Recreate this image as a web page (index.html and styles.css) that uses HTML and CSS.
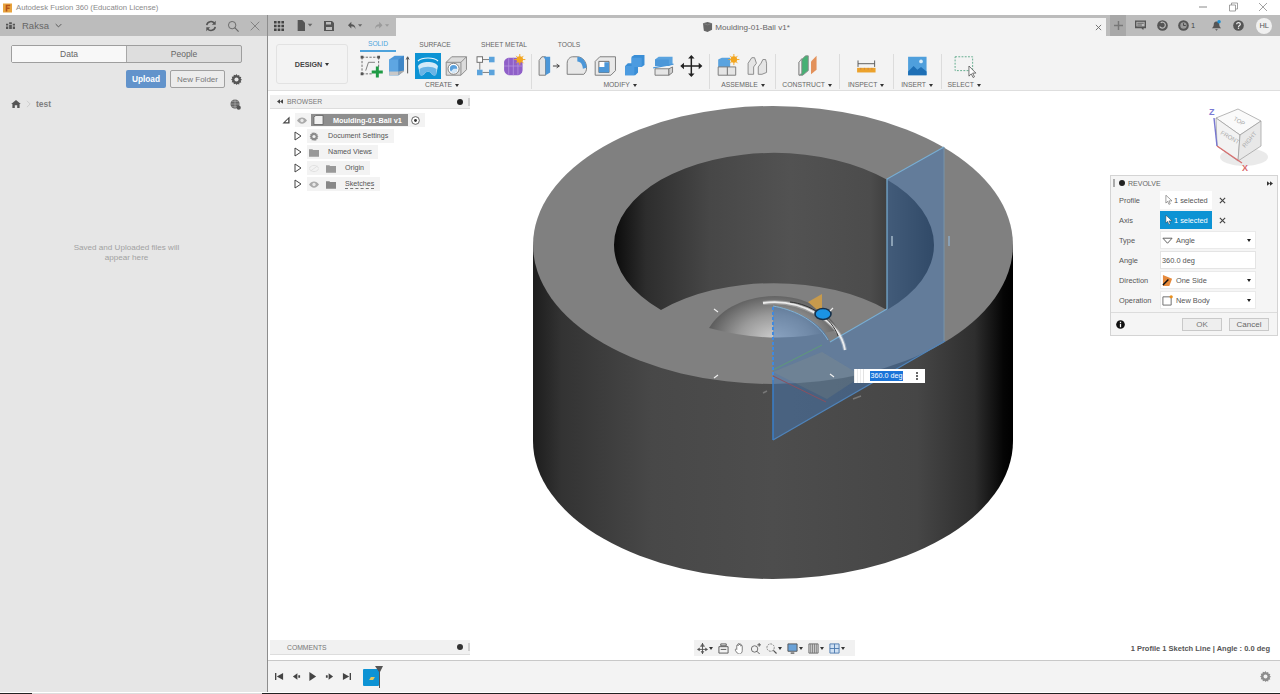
FILE: index.html
```html
<!DOCTYPE html>
<html lang="en">
<head>
<meta charset="utf-8">
<title>Autodesk Fusion 360</title>
<link rel="stylesheet" href="styles.css">
</head>
<body>
<header class="titlebar">
  <svg class="logo" viewBox="0 0 10 10"><rect width="10" height="10" fill="#e8a33d"/><path d="M3 1.5h5v1.6H4.8v1.4h2.6v1.5H4.8V9H3z" fill="#b5541c"/></svg>
  <span class="app-name">Autodesk Fusion 360 (Education License)</span>
  <div class="win-controls">
    <svg class="wc" viewBox="0 0 10 10"><path d="M1 5h8" stroke="#8a8a8a" fill="none"/></svg>
    <svg class="wc" viewBox="0 0 10 10"><path d="M1.5 3h6v6h-6zM3.500 3V1h6v6H7.500" stroke="#8a8a8a" fill="none" stroke-width=".8"/></svg>
    <svg class="wc" viewBox="0 0 10 10"><path d="M1 1l8 8M9 1l-8 8" stroke="#8a8a8a" fill="none" stroke-width=".8"/></svg>
  </div>
</header>
<div class="app">
  <aside class="left">
    <div class="left-head">
      <svg class="ico-team" viewBox="0 0 12 10"><path d="M4.500 1.500h3v2h-3zM1 3h2.500v2H1zM8.500 3H11v2H8.500zM1 6h2.500v3H1zM4.500 4.500h3V9h-3zM8.500 6H11v3H8.500z" fill="#555"/></svg>
      <span class="team">Raksa</span>
      <svg class="chev" viewBox="0 0 10 6"><path d="M1 1l4 4 4-4" stroke="#555" stroke-width="1.400" fill="none"/></svg>
      <span class="spacer"></span>
      <svg class="head-ico" viewBox="0 0 14 14"><path d="M2 6a5 5 0 0 1 9-2M12 8a5 5 0 0 1-9 2" stroke="#555" stroke-width="1.800" fill="none"/><path d="M12.500 1v4.500H8zM1.500 13V8.500H6z" fill="#555"/></svg>
      <svg class="head-ico" viewBox="0 0 14 14"><circle cx="6" cy="6" r="4.300" stroke="#666" stroke-width="1.100" fill="none"/><path d="M9 9l4.500 4.500" stroke="#666" stroke-width="1.300"/></svg>
      <svg class="head-ico" viewBox="0 0 14 14"><path d="M2 2l10 10M12 2L2 12" stroke="#7a7a7a" stroke-width="1"/></svg>
    </div>
    <div class="seg">
      <span class="seg-item seg-on">Data</span>
      <span class="seg-item">People</span>
    </div>
    <div class="actions">
      <button class="btn-upload">Upload</button>
      <button class="btn-folder">New Folder</button>
      <svg class="gear-lg" viewBox="0 0 14 14"><use href="#gear"/></svg>
    </div>
    <div class="crumbs">
      <svg class="home" viewBox="0 0 12 10"><path d="M6 0l6 5h-1.500v5H7.500V6.500h-3V10H1.500V5H0z" fill="#555"/></svg>
      <svg class="crumb-sep" viewBox="0 0 6 10"><path d="M1 1l4 4-4 4" stroke="#c8c8c8" fill="none"/></svg>
      <span class="crumb">test</span>
      <span class="spacer"></span>
      <svg class="globe" viewBox="0 0 12 12"><circle cx="5.500" cy="5.500" r="5" fill="#666"/><path d="M0 5.500h11M5.500 0v11M2 2.500h7M2 8.500h7" stroke="#ccc" stroke-width=".5"/><circle cx="9.500" cy="9.500" r="2.300" fill="#555"/></svg>
    </div>
    <p class="empty">Saved and Uploaded files will<br>appear here</p>
  </aside>
  <main class="main">
    <div class="topbar">
      <div class="quick">
        <svg class="q q-grid" viewBox="0 0 10 10"><path d="M0 0h2.600v2.600H0zM3.700 0h2.600v2.600H3.700zM7.400 0H10v2.600H7.400zM0 3.700h2.600v2.600H0zM3.700 3.700h2.600v2.600H3.700zM7.400 3.700H10v2.600H7.400zM0 7.400h2.600V10H0zM3.700 7.400h2.600V10H3.700zM7.400 7.400H10V10H7.400z" fill="#444"/></svg>
        <svg class="q q-file" viewBox="0 0 18 12"><path d="M1 0h5l3 3v9H1z" fill="#555"/><path d="M12 4h5l-2.500 3z" fill="#666"/></svg>
        <svg class="q q-save" viewBox="0 0 10 10"><path d="M0 0h8l2 2v8H0z" fill="#555"/><path d="M2 1h5v2.500H2zM2 6h6v3H2z" fill="#bcbcbc"/></svg>
        <svg class="q q-undo" viewBox="0 0 18 12"><path d="M4 1L0 5l4 4V6.300c2.500 0 4 .7 5 3.700 0-4-2-6-5-6z" fill="#555"/><path d="M12 4h5l-2.500 3z" fill="#666"/></svg>
        <svg class="q q-redo" viewBox="0 0 18 12"><path d="M5 1l4 4-4 4V6.300C2.500 6.300 1 7 0 10c0-4 2-6 5-6z" fill="#9a9a9a"/><path d="M12 4h5l-2.500 3z" fill="#9a9a9a"/></svg>
      </div>
      <div class="doc-tab">
        <div class="doc-title">
          <svg class="doc-cube" viewBox="0 0 12 11"><path d="M1 1.500L6 0l5 1.500v7L6 11 2 9.500z" fill="#666"/><path d="M1 1.500l5 1.700 5-1.700" stroke="#999" stroke-width=".5" fill="none"/></svg>
          <span>Moulding-01-Ball v1*</span>
        </div>
        <svg class="doc-close" viewBox="0 0 8 8"><path d="M1 1l6 6M7 1L1 7" stroke="#666" stroke-width="1"/></svg>
      </div>
      <div class="top-right">
        <span class="plus-box"><svg viewBox="0 0 10 10" class="plus"><path d="M5 0v10M0 5h10" stroke="#777" stroke-width="1.600"/></svg></span>
        <svg class="tr tr-chat" viewBox="0 0 12 11"><path d="M0 0h12v8.500H9.500L9 10.500 7 8.500H0z" fill="#555"/><path d="M1.500 1.500h9v5h-9z" fill="#bcbcbc"/><path d="M2.500 3h7M2.500 5h5" stroke="#555"/></svg>
        <svg class="tr tr-sync" viewBox="0 0 12 12"><circle cx="6" cy="6" r="5.800" fill="#555"/><path d="M3 7a3.200 3.200 0 1 0 1-4" stroke="#bcbcbc" stroke-width="1.300" fill="none"/></svg>
        <span class="tr-clock"><svg class="tr" viewBox="0 0 12 12"><circle cx="6" cy="6" r="5.800" fill="#555"/><circle cx="6" cy="6" r="3.500" fill="#999"/><path d="M6 3.500V6h2.500" stroke="#444" fill="none"/></svg><span class="clock-n">1</span></span>
        <svg class="tr tr-bell" viewBox="0 0 12 12"><path d="M6 1.500c2.300 0 3 1.700 3 3.500 0 2 1 3 2 4H1c1-1 2-2 2-4 0-1.800.7-3.500 3-3.500zM4.500 10h3L6 11.800z" fill="#555"/><circle cx="8.800" cy="2" r="1.900" fill="#1f8fd0"/></svg>
        <svg class="tr tr-help" viewBox="0 0 12 12"><circle cx="6" cy="6" r="5.800" fill="#555"/><path d="M4 4.500C4 2.200 8 2.300 8 4.500 8 6 6 6 6 7.500" stroke="#eee" stroke-width="1.300" fill="none"/><rect x="5.300" y="8.300" width="1.400" height="1.400" fill="#eee"/></svg>
        <span class="avatar">HL</span>
      </div>
    </div>
    <div class="toolbar">
      <button class="design">DESIGN <i class="caret"></i></button>
      <div class="ribbon">
        <nav class="tabs">
          <span class="tab t-solid">SOLID</span>
          <span class="tab t-surface">SURFACE</span>
          <span class="tab t-sheet">SHEET METAL</span>
          <span class="tab t-tools">TOOLS</span>
        </nav>
        <div class="groups">
          <section class="grp g-create sep">
            <div class="icons">
              <svg class="tool" viewBox="0 0 28 26"><path d="M5 3.500h18M5 3.500v18M23 3.500v11M5 21.500h11" stroke="#666" stroke-dasharray="2.500 1.500" fill="none"/><path d="M9 18l3-9h7" stroke="#777" fill="none"/><path d="M3.500 2h3v3h-3zM21.500 2h3v3h-3zM3.500 20h3v3h-3z" fill="#555"/><path d="M20 13.500h3.200v4.300h4.300V21h-4.300v4.500H20V21h-4.500v-3.200H20z" fill="#1f9b45"/></svg>
              <svg class="tool" viewBox="0 0 28 26"><path d="M3 6l6-4h10v16l-6 5H3z" fill="#4c97d8"/><path d="M3 6h10v17H3z" fill="#5ea6e2"/><path d="M13 6l6-4v16l-6 5z" fill="#3f86c6"/><path d="M3 19h10v4H3z" fill="#c8c8c8"/><path d="M13 19l6-1v1l-6 4z" fill="#aaa"/><path d="M23 21V4M21.500 6L23 3l1.500 3" stroke="#444" fill="none"/></svg>
              <span class="tool-on"><svg class="tool-inner" viewBox="0 0 26 26"><path d="M3 8C7 4 19 4 23 8" stroke="#e8f4fb" stroke-width="1.200" fill="none"/><path d="M3 13C6 7.500 20 7.500 23 13L21 22C19 23 17 22 16 20C14 18 12 18 10 20C9 22 7 23 5 22z" fill="#d3eaf8"/><path d="M4.500 16C9 13 17 13 21.500 16L21 22C19 23 17 22 16 20C14 18 12 18 10 20C9 22 7 23 5 22z" fill="#68b4e6"/></svg></span>
              <svg class="tool" viewBox="0 0 28 26"><path d="M3 9l6-6h16v14l-6 6H3z" fill="#dcdcdc" stroke="#888"/><path d="M3 9h16v14M19 9l6-6" stroke="#888" fill="none"/><circle cx="11" cy="16" r="6" fill="#fff" stroke="#777"/><circle cx="11" cy="16" r="4" fill="#5aa0dc"/><path d="M11 16h4a4 4 0 0 1-7 3z" fill="#d7e8f6"/></svg>
              <svg class="tool" viewBox="0 0 28 26"><rect x="5" y="3" width="6" height="6" fill="#fff" stroke="#666"/><rect x="18" y="3" width="6" height="6" fill="#5ba3dc"/><rect x="5" y="17" width="6" height="6" fill="#5ba3dc"/><rect x="18" y="17" width="6" height="6" fill="#5ba3dc"/><path d="M11 6h7M8 9v8M11 20h7" stroke="#777" fill="none"/></svg>
              <svg class="tool" viewBox="0 0 28 26"><path d="M4 9c0-3 3-5 6-5h8c3 0 6 3 6 6v7c0 4-3 6-6 6h-8c-3 0-6-3-6-6z" fill="#8f5fc8"/><path d="M14 4v19M4 13h20M9 4.500v18M19 4.500v18" stroke="#b796e0" stroke-width=".8"/><circle cx="21" cy="6" r="3.500" fill="#f3a61f"/><path d="M21 0v12M15 6h12M17 2l8 8M25 2l-8 8" stroke="#f3a61f"/></svg>
            </div>
            <span class="grp-label">CREATE <i class="caret"></i></span>
          </section>
          <section class="grp g-modify sep">
            <div class="icons">
              <svg class="tool" viewBox="0 0 28 26"><path d="M4 7l3-4h4v20H4z" fill="#e5e5e5" stroke="#777"/><path d="M9 3h7v17l-5 3V7z" fill="#4c97d8"/><path d="M19 13h6M23 11l3 2-3 2" stroke="#333" fill="none"/></svg>
              <svg class="tool" viewBox="0 0 28 26"><path d="M3 22V10c0-4 3-7 6-7h5c6 0 10 6 10 12 0 3-1 5-3 7z" fill="#e8e8e8" stroke="#777"/><path d="M14 3c6 0 10 6 10 12l-4 1c0-4-2-8-6-8z" fill="#4c97d8"/></svg>
              <svg class="tool" viewBox="0 0 28 26"><path d="M3 8l5-5h17v15l-5 5H3z" fill="#e9e9e9" stroke="#777"/><path d="M7 8h11v12H7z" fill="#fff" stroke="#666"/><path d="M7 14h6V9h5v11H7z" fill="#4c97d8"/></svg>
              <svg class="tool" viewBox="0 0 28 26"><path d="M11 3l3-2h11v11l-3 2h-4v6l-3 3H4V13l3-3h4z" fill="#3a8ed6"/><path d="M4 13h10v10H4zM11 4h11v10H11z" fill="#4c9be0"/></svg>
              <svg class="tool" viewBox="0 0 28 26"><path d="M5 6l4-3h15v8l-4 2H5z" fill="#5aa3df"/><path d="M5 6h15v7H5z" fill="#4c97d8"/><path d="M3 15L25 11" stroke="#4c97d8" stroke-width="1.500"/><path d="M5 16h15v7H5z" fill="#e5e5e5" stroke="#777"/><path d="M20 16l4-2v6l-4 3z" fill="#d0d0d0" stroke="#777"/></svg>
              <svg class="tool" viewBox="0 0 28 26"><path d="M14 3v20M4 13h20" stroke="#222" stroke-width="1.600"/><path d="M14 1l3.500 4h-7zM14 25l3.500-4h-7zM2 13l4-3.500v7zM26 13l-4-3.500v7z" fill="#222"/></svg>
            </div>
            <span class="grp-label">MODIFY <i class="caret"></i></span>
          </section>
          <section class="grp g-assemble sep">
            <div class="icons">
              <svg class="tool" viewBox="0 0 28 26"><path d="M3 6l4-2h9v11H3z" fill="#5aa3df"/><path d="M3 14h10v9H3z" fill="#e5e5e5" stroke="#777"/><path d="M13 14h9v9h-9z" fill="#e5e5e5" stroke="#777"/><circle cx="20" cy="6" r="3.500" fill="#f3a61f"/><path d="M20 0v12M14 6h12M16 2l8 8M24 2l-8 8" stroke="#f3a61f"/></svg>
              <svg class="tool" viewBox="0 0 28 26"><path d="M4 22V10l4-6h3l2 6-3 4v8z" fill="#e5e5e5" stroke="#888"/><path d="M15 22v-8l3-4 2-4h3l1 4v10l-5 2z" fill="#e5e5e5" stroke="#888"/></svg>
            </div>
            <span class="grp-label">ASSEMBLE <i class="caret"></i></span>
          </section>
          <section class="grp g-construct sep">
            <div class="icons">
              <svg class="tool" viewBox="0 0 28 26"><path d="M5 23V9l7-7h3v16l-6 5z" fill="#46b174" stroke="#888"/><path d="M5 23V9l3-4v16z" fill="#f2f2f2" stroke="#888"/><path d="M18 22V8l6-6v15z" fill="#e3915a"/></svg>
            </div>
            <span class="grp-label">CONSTRUCT <i class="caret"></i></span>
          </section>
          <section class="grp g-inspect sep">
            <div class="icons">
              <svg class="tool" viewBox="0 0 28 26"><path d="M5 7v7M23 7v7M5 10.500h18" stroke="#555" fill="none"/><rect x="4" y="15" width="20" height="5" fill="#eca22c"/><path d="M8 15v2M12 15v2M16 15v2M20 15v2" stroke="#a66" stroke-width=".5"/></svg>
            </div>
            <span class="grp-label">INSPECT <i class="caret"></i></span>
          </section>
          <section class="grp g-insert sep">
            <div class="icons">
              <svg class="tool" viewBox="0 0 28 26"><rect x="4" y="3" width="20" height="20" fill="#4f9fdc"/><path d="M4 19l6-6 4 4 4-3 6 5v4H4z" fill="#1e6fb5"/><circle cx="18" cy="8" r="2" fill="#d7ecfa"/></svg>
            </div>
            <span class="grp-label">INSERT <i class="caret"></i></span>
          </section>
          <section class="grp g-select">
            <div class="icons">
              <svg class="tool" viewBox="0 0 28 26"><rect x="4" y="3" width="19" height="15" fill="none" stroke="#5aa888" stroke-dasharray="2 1.500"/><path d="M19 13v11l2.500-2.500 2 4 1.500-.8-2-4h3.500z" fill="#fff" stroke="#444" stroke-width=".8"/></svg>
            </div>
            <span class="grp-label">SELECT <i class="caret"></i></span>
          </section>
        </div>
      </div>
    </div>
    <div class="viewport">
      <svg class="model" viewBox="268 91 1012 569">
        <defs>
          <linearGradient id="side" x1="533" x2="1013" y1="0" y2="0" gradientUnits="userSpaceOnUse">
            <stop offset="0" stop-color="#1d1d1d"/><stop offset=".06" stop-color="#333"/><stop offset=".25" stop-color="#484848"/><stop offset=".5" stop-color="#4d4d4d"/><stop offset=".8" stop-color="#464646"/><stop offset=".92" stop-color="#2e2e2e"/><stop offset=".98" stop-color="#050505"/><stop offset="1" stop-color="#000"/>
          </linearGradient>
          <linearGradient id="wall" x1="614" x2="934" y1="0" y2="0" gradientUnits="userSpaceOnUse">
            <stop offset="0" stop-color="#0b0b0b"/><stop offset=".1" stop-color="#2d2d2d"/><stop offset=".3" stop-color="#474747"/><stop offset=".55" stop-color="#525252"/><stop offset=".8" stop-color="#4c4c4c"/><stop offset="1" stop-color="#1c1c1c"/>
          </linearGradient>
          <radialGradient id="dome" cx="775" cy="340" r="46" gradientUnits="userSpaceOnUse" gradientTransform="translate(775 340) scale(1.45 1) translate(-775 -340)">
            <stop offset="0" stop-color="#d0d0d0"/><stop offset=".55" stop-color="#9a9a9a"/><stop offset="1" stop-color="#5e5e5e"/>
          </radialGradient>
        </defs>
        <path d="M533 245V441A240 138 0 0 0 1013 441V245z" fill="url(#side)"/>
        <ellipse cx="773" cy="245" rx="240" ry="139" fill="#808080"/>
        <path d="M661 310A160 92 0 1 1 887 310A160 92 0 0 0 661 310z" fill="url(#wall)"/>
        <path d="M709 328C722 306 750 296 775 296C805 296 828 310 838 330Q775 346 709 328z" fill="url(#dome)"/>
        <path d="M808 302L822 294V314z" fill="#c79a4c"/>
        <path d="M944 147L887 179V309L830 342C822 322 800 312 773 306V440L944 341z" fill="#4678b4" fill-opacity=".5"/>
        <path d="M773 372L822 352L862 376L827 399z" fill="#b0a878" fill-opacity=".15"/>
        <path d="M773 370L822 345" stroke="#5e9a78" stroke-width="1" fill="none"/>
        <path d="M773 376L826 402" stroke="#8a5060" stroke-width="1" fill="none"/>
        <path d="M944 147L887 179V309L830 342" stroke="#78aed4" stroke-width="1.200" fill="none"/>
        <path d="M944 147V341" stroke="#7793ab" stroke-width="1" fill="none"/>
        <path d="M773 440L945 341" stroke="#4f84bb" stroke-width="1.400" fill="none"/>
        <path d="M773 306C790 309 815 318 828 340" stroke="#7fb2d6" stroke-width="1" fill="none"/>
        <path d="M773 380V440" stroke="#3a7fca" stroke-width="1.500" fill="none"/>
        <path d="M773 307V380" stroke="#3f8ae0" stroke-width="2" stroke-dasharray="3 2" fill="none"/>
        <path d="M763 303C800 298 840 320 845 350" stroke="#f4f4f4" stroke-width="4" fill="none" stroke-opacity=".3"/>
        <path d="M763 303C800 298 840 320 845 350" stroke="#f4f4f4" stroke-width="1.800" fill="none" stroke-opacity=".9"/>
        <path d="M790 302C810 304 832 318 838 336" stroke="#333" stroke-width="1" fill="none"/>
        <ellipse cx="823" cy="314" rx="8" ry="5.500" fill="#1b93e4" stroke="#15304a" stroke-width="1.600"/>
        <path d="M714 309l4 3M830 311l3-3M714 378l4-3M830 374l4 3" stroke="#eee" stroke-width="1.200"/>
        <path d="M892 236v10M949 236v10" stroke="#8aa0b4" stroke-width="2"/>
        <path d="M767 391l-4 2M853 399l8-3" stroke="#777" stroke-width="1.500"/>
      </svg>

      <section class="browser panel-bar">
        <svg class="dbl" viewBox="0 0 8 6"><path d="M4 0v6L0 3zM8 0v6L4 3z" fill="#444"/></svg>
        <span class="bar-title">BROWSER</span>
        <span class="spacer"></span>
        <i class="pin"></i><i class="grip"></i>
      </section>
      <div class="tree">
        <div class="tree-row root">
          <svg class="tri-root" viewBox="0 0 9 9"><path d="M.5 8.500h8v-8zM3.500 7l3.500-3.500V7z" fill="#444" fill-rule="evenodd"/></svg>
          <div class="node node-root">
            <svg class="eye" viewBox="0 0 12 8"><path d="M0 4c3-5 9-5 12 0-3 5-9 5-12 0z" fill="#aaa"/><circle cx="6" cy="4" r="2" fill="#e8e8e8"/></svg>
            <span class="root-label"><svg class="root-ico" viewBox="0 0 12 12"><path d="M1 3l2-2h8v10H1z" fill="#f1f1f1" stroke="#666"/></svg><b>Moulding-01-Ball v1</b></span>
            <svg class="radio" viewBox="0 0 10 10"><circle cx="5" cy="5" r="4.300" fill="#fff" stroke="#555"/><circle cx="5" cy="5" r="1.600" fill="#333"/></svg>
          </div>
        </div>
        <div class="tree-row">
          <svg class="tri" viewBox="0 0 8 10"><path d="M1 1l6 4-6 4z" fill="#fff" stroke="#444" stroke-width="1"/></svg>
          <div class="node"><svg class="n-ico" viewBox="0 0 14 14"><use href="#gear2"/></svg><span class="n-text">Document Settings</span></div>
        </div>
        <div class="tree-row">
          <svg class="tri" viewBox="0 0 8 10"><path d="M1 1l6 4-6 4z" fill="#fff" stroke="#444" stroke-width="1"/></svg>
          <div class="node"><svg class="n-ico" viewBox="0 0 12 10"><path d="M0 1h4l1 1h7v8H0z" fill="#999"/></svg><span class="n-text">Named Views</span></div>
        </div>
        <div class="tree-row">
          <svg class="tri" viewBox="0 0 8 10"><path d="M1 1l6 4-6 4z" fill="#fff" stroke="#444" stroke-width="1"/></svg>
          <div class="node"><svg class="n-ico" viewBox="0 0 12 8"><path d="M0 4c3-5 9-5 12 0-3 5-9 5-12 0zM2 7l8-6" stroke="#ddd" fill="none"/></svg><svg class="n-ico n-folder" viewBox="0 0 12 10"><path d="M0 1h4l1 1h7v8H0z" fill="#999"/></svg><span class="n-text">Origin</span></div>
        </div>
        <div class="tree-row">
          <svg class="tri" viewBox="0 0 8 10"><path d="M1 1l6 4-6 4z" fill="#fff" stroke="#444" stroke-width="1"/></svg>
          <div class="node"><svg class="n-ico" viewBox="0 0 12 8"><path d="M0 4c3-5 9-5 12 0-3 5-9 5-12 0z" fill="#aaa"/><circle cx="6" cy="4" r="2" fill="#e8e8e8"/></svg><svg class="n-ico n-folder" viewBox="0 0 12 10"><path d="M0 1h4l1 1h7v8H0z" fill="#888"/></svg><span class="n-text sketches">Sketches</span></div>
        </div>
      </div>

      <svg class="cube" viewBox="0 0 70 72">
        <ellipse cx="36" cy="52" rx="24" ry="9" fill="#d8d8d8" opacity=".55"/>
        <path d="M8 13L30 4L53 16L32 30z" fill="#fafafa" stroke="#999" stroke-width=".7"/>
        <path d="M8 13L32 30L30 56L9 41z" fill="#f2f2f2" stroke="#999" stroke-width=".7"/>
        <path d="M32 30L53 16L53 41L30 56z" fill="#e8e8e8" stroke="#999" stroke-width=".7"/>
        <text class="cube-t" transform="translate(25 15) rotate(30)">TOP</text>
        <text class="cube-t" transform="translate(12 29) rotate(30)">FRONT</text>
        <text class="cube-t" transform="translate(37 43) rotate(-50)">RIGHT</text>
        <path d="M9 41L6 13" stroke="#7777d0" stroke-width="1.400"/>
        <path d="M9 41L34 58" stroke="#d97070" stroke-width="1.400"/>
        <text class="cube-z" x="1" y="10">Z</text>
        <text class="cube-x" x="34" y="66">X</text>
      </svg>

      <form class="revolve">
        <div class="rev-head"><i class="grip"></i><i class="pin"></i><span class="rev-title">REVOLVE</span><span class="spacer"></span><svg class="dbl" viewBox="0 0 8 6"><path d="M0 0v6l4-3zM4 0v6l4-3z" fill="#333"/></svg></div>
        <div class="rev-row"><label class="rev-label">Profile</label><span class="pick"><svg class="cursor" viewBox="0 0 8 11"><path d="M1 0v9l2-2 1.500 3.500 1.500-.7L4.500 6.500H8z" fill="#fff" stroke="#666" stroke-width=".7"/></svg>1 selected</span><svg class="xmark" viewBox="0 0 8 8"><path d="M1 1l6 6M7 1L1 7" stroke="#444" stroke-width="1.300"/></svg></div>
        <div class="rev-row"><label class="rev-label">Axis</label><span class="pick pick-on"><svg class="cursor" viewBox="0 0 8 11"><path d="M1 0v9l2-2 1.500 3.500 1.500-.7L4.500 6.500H8z" fill="#fff" stroke="#333" stroke-width=".5"/></svg>1 selected</span><svg class="xmark" viewBox="0 0 8 8"><path d="M1 1l6 6M7 1L1 7" stroke="#444" stroke-width="1.300"/></svg></div>
        <div class="rev-row"><label class="rev-label">Type</label><span class="select"><svg class="opt" viewBox="0 0 12 10"><path d="M1 2.500h10L6 8z" fill="#fff" stroke="#555"/></svg>Angle<i class="caret"></i></span></div>
        <div class="rev-row"><label class="rev-label">Angle</label><span class="field">360.0 deg</span></div>
        <div class="rev-row"><label class="rev-label">Direction</label><span class="select"><svg class="opt" viewBox="0 0 12 12"><path d="M1 0l10 4-3 8H1z" fill="#e68a3c"/><path d="M1 11l6-6" stroke="#111" stroke-width="1.600"/></svg>One Side<i class="caret"></i></span></div>
        <div class="rev-row"><label class="rev-label">Operation</label><span class="select"><svg class="opt" viewBox="0 0 12 12"><path d="M1 2h9v9H1z" fill="#fff" stroke="#666"/><circle cx="10" cy="2" r="1.800" fill="#e8901f"/></svg>New Body<i class="caret"></i></span></div>
        <div class="rev-foot">
          <svg class="info" viewBox="0 0 10 10"><circle cx="5" cy="5" r="4.800" fill="#111"/><path d="M4.300 2h1.400v1.300H4.300zM4.300 4.200h1.400V8H4.300z" fill="#fff"/></svg>
          <span class="spacer"></span>
          <button class="rev-btn ok" type="button">OK</button>
          <button class="rev-btn" type="button">Cancel</button>
        </div>
      </form>

      <div class="dim-input">
        <span class="dim-grip"></span>
        <span class="dim-text"><span class="dim-sel">360.0 deg</span></span>
        <span class="dim-more"></span>
      </div>

      <section class="comments panel-bar">
        <span class="bar-title">COMMENTS</span>
        <span class="spacer"></span>
        <i class="pin pin-plus"></i><i class="grip"></i>
      </section>

      <div class="navbar">
        <svg class="nv" viewBox="0 0 12 12"><path d="M6 0v12M1 7h10M3.500 3.500h5" stroke="#555"/><path d="M6 0L4 3h4zM6 12l-2-3h4zM0 7l3-2v4zM12 7l-3-2v4z" fill="#555"/></svg><i class="nv-c"></i>
        <svg class="nv nv-g" viewBox="0 0 12 12"><path d="M3 1h6v2H3zM1 4h10v7H1z" fill="none" stroke="#555"/><path d="M3 7h6" stroke="#555"/></svg>
        <svg class="nv nv-g" viewBox="0 0 12 12"><path d="M3 7V3c0-1.500 1.500-1.500 1.500 0V1.500C4.500 0 6 0 6 1.500V2c0-1.500 1.500-1.500 1.500 0v1.500C7.500 2 9 2 9 3.500V8c0 2-1 4-3 4S3 10.500 1.500 8C1 6.500 2.500 6 3 7z" fill="#fff" stroke="#555" stroke-width=".8"/></svg>
        <svg class="nv nv-g" viewBox="0 0 12 12"><circle cx="5" cy="6.500" r="3.500" fill="none" stroke="#666"/><path d="M7.500 9l3 3M10 0v4M8 2h4" stroke="#555"/></svg>
        <svg class="nv nv-g nv-zoom" viewBox="0 0 12 12"><circle cx="5" cy="5" r="4" fill="none" stroke="#777" stroke-dasharray="2 1"/><path d="M8 8l3.500 3.500" stroke="#555" stroke-width="1.300"/></svg><i class="nv-c"></i>
        <svg class="nv nv-g" viewBox="0 0 12 12"><path d="M1 1h10v8H1z" fill="#6aa2d8" stroke="#555"/><path d="M4 11h4" stroke="#555" stroke-width="1.400"/></svg><i class="nv-c"></i>
        <svg class="nv nv-g" viewBox="0 0 12 12"><path d="M1 1h10v10H1z" fill="#ddd" stroke="#666"/><path d="M3 1v10M5 1v10M7 1v10M9 1v10" stroke="#777"/></svg><i class="nv-c"></i>
        <svg class="nv nv-g" viewBox="0 0 12 12"><path d="M1 1h10v10H1zM1 6h10M6 1v10" fill="#cfe0f2" stroke="#4b78ae"/></svg><i class="nv-c"></i>
      </div>
      <p class="status">1 Profile 1 Sketch Line | Angle : 0.0 deg</p>
    </div>
    <footer class="timeline">
      <div class="tl-btns">
        <svg class="tl" viewBox="0 0 10 10"><path d="M0 1h1.500v8H0zM9 1v8L2 5z" fill="#444"/></svg>
        <svg class="tl" viewBox="0 0 10 10"><path d="M6 1.500v7L1 5zM7 3.500h2v3H7z" fill="#444"/></svg>
        <svg class="tl" viewBox="0 0 10 10"><path d="M1.500 0v10L9 5z" fill="#444"/></svg>
        <svg class="tl" viewBox="0 0 10 10"><path d="M4 1.500v7L9 5zM1 3.500h2v3H1z" fill="#444"/></svg>
        <svg class="tl" viewBox="0 0 10 10"><path d="M1 1v8l7-4zM8.500 1H10v8H8.500z" fill="#444"/></svg>
      </div>
      <div class="tl-feature">
        <span class="tl-chip"><i class="tl-spark"></i></span>
        <svg class="tl-marker" viewBox="0 0 8 22"><path d="M0 0h8L5 6v16H4V6z" fill="#555"/></svg>
      </div>
      <span class="spacer"></span>
      <svg class="tl-gear" viewBox="0 0 14 14"><use href="#gear2"/></svg>
    </footer>
  </main>
</div>
<div class="bottom-edge"></div>
<svg class="defs" width="0" height="0">
  <defs>
    <g id="gear"><path d="M7 0l1.200 2 2.200-.8.400 2.300 2.300.4-.8 2.200 1.700 1.200-1.700 1.400.8 2.200-2.300.3-.4 2.300-2.200-.8L7 14l-1.200-1.700-2.200.8-.4-2.300-2.300-.3.8-2.200L0 7l1.700-1.200-.8-2.200 2.300-.4.400-2.300 2.200.8z" fill="#555" fill-rule="evenodd"/><circle cx="7" cy="7" r="2.600" fill="#e6e6e6"/></g>
    <g id="gear2"><path d="M7 0l1.200 2 2.200-.8.400 2.300 2.300.4-.8 2.200 1.700 1.200-1.700 1.400.8 2.200-2.300.3-.4 2.300-2.200-.8L7 14l-1.200-1.700-2.200.8-.4-2.300-2.300-.3.8-2.200L0 7l1.700-1.200-.8-2.200 2.300-.4.400-2.300 2.200.8z" fill="#8c8c8c"/><circle cx="7" cy="7" r="2.500" fill="#f1f1f1"/></g>
  </defs>
</svg>
</body>
</html>
```

FILE: styles.css
```css
* { box-sizing: border-box; }
html, body { margin: 0; height: 694px; overflow: hidden; }
body { font-family: "Liberation Sans", Arial, sans-serif; background: #fff; color: #555; position: relative; }
.spacer { flex: 1; }
p { margin: 0; }
button { font-family: inherit; }

/* Window title */
.titlebar { height: 15px; display: flex; align-items: center; padding-left: 3px; background: #fff; }
.logo { width: 9px; height: 10px; margin-right: 4px; }
.app-name { font-size: 7.700px; color: #8a8a8a; }
.win-controls { margin-left: auto; display: flex; gap: 20px; padding: 0 12px 2px 0; }
.wc { width: 10px; height: 10px; }

/* App shell */
.app { display: flex; height: 677px; }
.left { width: 268px; background: #e6e6e6; border-right: 1px solid #8d8d8d; display: flex; flex-direction: column; }
.main { flex: 1; display: flex; flex-direction: column; min-width: 0; }

/* Left panel */
.left-head { height: 21px; background: #bcbcbc; display: flex; align-items: center; padding: 0 6px 0 5px; }
.ico-team { width: 11px; height: 9px; margin-right: 6px; }
.team { font-size: 9.500px; color: #666; }
.chev { width: 7px; height: 5px; margin-left: 6px; }
.head-ico { width: 12px; height: 12px; margin-left: 10px; }
.seg { margin: 9px 25px 0 11px; height: 18px; display: flex; border: 1px solid #9e9e9e; border-radius: 2px; background: #dedede; }
.seg-item { flex: 116; display: flex; align-items: center; justify-content: center; font-size: 8.500px; color: #666; }
.seg-item + .seg-item { border-left: 1px solid #a8a8a8; flex: 116; }
.seg-on { background: #f8f8f8; }
.actions { display: flex; align-items: center; margin-top: 7px; padding-left: 126px; }
.btn-upload { width: 40px; height: 18px; border: 0; border-radius: 2px; background: #6293cb; color: #fff; font-size: 8.300px; font-weight: bold; padding: 0; }
.btn-folder { width: 55px; height: 18px; margin-left: 4px; border: 1px solid #a0a0a0; border-radius: 2px; background: #ececec; color: #777; font-size: 8px; padding: 0; }
.gear-lg { width: 11px; height: 11px; margin-left: 6px; }
.crumbs { display: flex; align-items: center; margin-top: 8px; height: 16px; padding: 0 26px 0 11px; }
.home { width: 10px; height: 8px; }
.crumb-sep { width: 5px; height: 8px; margin-left: 5px; }
.crumb { font-size: 8.500px; color: #666; margin-left: 5px; font-weight: bold; opacity: .8; }
.globe { width: 11px; height: 11px; }
.empty { margin-top: 131px; padding-right: 14px; text-align: center; font-size: 8.100px; line-height: 10px; color: #a2a2a2; }

/* Top bar */
.topbar { height: 21px; background: #bcbcbc; display: flex; }
.quick { width: 128px; display: flex; align-items: center; padding-left: 6px; }
.q { height: 10px; }
.q-grid { width: 10px; }
.q-file { width: 18px; margin-left: 12px; height: 11px; }
.q-save { width: 10px; margin-left: 10px; }
.q-undo { width: 17px; margin-left: 13px; }
.q-redo { width: 17px; margin-left: 10px; }
.doc-tab { flex: 1; margin-top: 3px; background: #f3f3f3; display: flex; align-items: center; justify-content: center; position: relative; }
.doc-title { display: flex; align-items: center; gap: 2px; font-size: 8.100px; color: #666; margin-left: -10px; }
.doc-cube { width: 11px; height: 10px; }
.doc-close { position: absolute; right: 4px; top: 6px; width: 7px; height: 7px; }
.top-right { width: 174px; display: flex; align-items: center; padding-left: 4px; }
.plus-box { width: 16px; height: 21px; background: #a8a8a8; display: flex; align-items: center; justify-content: center; flex: none; }
.plus { width: 9px; height: 9px; }
.tr { width: 11px; height: 11px; flex: none; }
.tr-chat { margin-left: 9px; }
.tr-sync { margin-left: 11px; }
.tr-clock { margin-left: 10px; display: flex; align-items: center; gap: 2px; }
.clock-n { font-size: 7.500px; color: #444; }
.tr-bell { margin-left: 16px; }
.tr-help { margin-left: 11px; }
.avatar { margin-left: 12px; width: 16px; height: 16px; border-radius: 50%; background: #f0f0f0; font-size: 7.500px; color: #555; display: flex; align-items: center; justify-content: center; flex: none; }

/* Toolbar */
.toolbar { height: 55px; background: #f3f3f3; border-bottom: 1px solid #dedede; display: flex; padding-left: 8px; }
.design { width: 72px; height: 40px; margin-top: 8px; background: #f3f3f3; border: 1px solid #e2e2e2; border-radius: 3px; font-size: 7.200px; font-weight: bold; color: #444; padding: 0; }
.caret { display: inline-block; width: 0; height: 0; border: 2px solid transparent; border-top: 3px solid #333; border-bottom: 0; vertical-align: middle; margin-left: 1px; }
.ribbon { margin-left: 12px; flex: 1; display: flex; flex-direction: column; }
.tabs { display: flex; height: 16px; }
.tab { height: 16px; display: flex; align-items: center; justify-content: center; font-size: 6.700px; color: #666; }
.t-solid { width: 36px; color: #4da3dc; border-bottom: 2px solid #4da3dc; }
.t-surface { width: 78px; }
.t-sheet { width: 60px; }
.t-tools { width: 70px; }
.groups { display: flex; margin-left: -4px; height: 38px; }
.grp { display: flex; flex-direction: column; align-items: center; flex: none; margin-right: 2px; }
.sep { position: relative; }
.sep::after { content: ""; position: absolute; right: -4px; top: 2px; bottom: 1px; width: 1px; background: #dcdcdc; }
.g-create { width: 172px; margin-right: 6px; }
.g-modify { width: 172px; margin-right: 8px; }
.g-assemble { width: 58px; margin-right: 6px; }
.g-construct { width: 58px; margin-right: 6px; }
.g-inspect { width: 48px; margin-right: 6px; }
.g-insert { width: 42px; margin-right: 6px; }
.g-select { width: 40px; }
.icons { display: flex; justify-content: center; align-items: center; height: 27px; width: 100%; }
.tool { width: 28.660px; height: 24px; flex: none; }
.tool-on { width: 28.660px; height: 26px; flex: none; display: flex; align-items: center; justify-content: center; }
.tool-inner { width: 26px; height: 26px; background: #0d93d4; }
.grp-label { font-size: 6.800px; color: #666; margin-top: 2px; white-space: nowrap; line-height: 8px; }

/* Viewport */
.viewport { flex: 1; position: relative; background: #fff; overflow: hidden; }
.model { position: absolute; inset: 0; width: 100%; height: 100%; }
.panel-bar { position: absolute; left: 2px; width: 200px; background: #f1f1f1; border-bottom: 1px solid #ddd; display: flex; align-items: center; padding: 0 0 0 7px; }
.browser { top: 4px; height: 14px; }
.comments { bottom: 5px; height: 15px; }
.comments .bar-title { margin-left: 10px; }
.bar-title { font-size: 6.800px; color: #777; }
.browser .bar-title { margin-left: 4px; }
.dbl { width: 6px; height: 5px; flex: none; }
.pin { width: 6px; height: 6px; border-radius: 50%; background: #222; flex: none; }
.pin-plus { background: #333; }
.grip { width: 2px; height: 8px; background: #cfcfcf; margin-left: 5px; flex: none; }

/* Tree */
.tree { position: absolute; left: 18px; top: 22px; display: flex; flex-direction: column; gap: 2px; }
.tree-row { height: 14px; display: flex; align-items: center; padding-left: 8px; font-size: 7.150px; }
.tree-row.root { padding-left: 0; margin-left: -4px; }
.tri-root { width: 8px; height: 8px; margin-right: 5px; flex: none; }
.tri { width: 8px; height: 10px; margin-right: 5px; flex: none; }
.node { height: 14px; background: #f3f3f3; display: flex; align-items: center; padding: 0 6px 0 2px; color: #555; }
.node-root { padding: 0 5px 0 2px; }
.eye { width: 10px; height: 7px; margin-right: 4px; flex: none; }
.root-label { width: 97px; height: 12px; background: #8e8e8e; display: flex; align-items: center; color: #fff; font-size: 7.300px; }
.root-label b { margin-left: 9px; white-space: nowrap; }
.root-ico { width: 11px; height: 12px; margin-left: 2px; flex: none; }
.radio { width: 9px; height: 9px; margin-left: 3px; flex: none; }
.n-ico { width: 10px; height: 9px; flex: none; }
.n-folder { margin-left: 7px; }
.n-text { margin-left: 9px; white-space: nowrap; }
.sketches { text-decoration: underline dashed #777 1px; text-underline-offset: 2px; }

/* View cube */
.cube { position: absolute; right: 2px; top: 14px; width: 70px; height: 72px; }
.cube-t { font-size: 6px; fill: #aaa; font-family: "Liberation Sans", sans-serif; }
.cube-z { font-size: 9px; font-weight: bold; fill: #7a7ad4; font-family: "Liberation Sans", sans-serif; }
.cube-x { font-size: 9px; font-weight: bold; fill: #d96a6a; font-family: "Liberation Sans", sans-serif; }

/* Revolve dialog */
.revolve { position: absolute; left: 842px; top: 84px; width: 168px; height: 161px; background: #f5f5f5; border: 1px solid #d4d4d4; display: flex; flex-direction: column; font-size: 7.400px; color: #555; }
.rev-head { height: 14px; display: flex; align-items: center; padding: 0 4px 0 2px; flex: none; }
.rev-head .grip { margin: 0 4px 0 0; background: #aaa; }
.rev-head .pin { margin-right: 2px; }
.rev-title { font-size: 7px; color: #666; margin-left: 1px; }
.rev-row { height: 20px; display: flex; align-items: center; flex: none; padding-left: 8px; }
.rev-label { width: 41px; flex: none; }
.pick { width: 52px; height: 18px; background: #fff; display: flex; align-items: center; padding-left: 5px; color: #555; white-space: nowrap; }
.pick-on { background: #0d93d4; color: #fff; }
.cursor { width: 7px; height: 10px; margin-right: 2px; flex: none; }
.xmark { width: 7px; height: 7px; margin-left: 7px; }
.select { width: 96px; height: 18px; background: #fff; display: flex; align-items: center; padding-left: 1px; position: relative; border: 1px solid #eaeaea; }
.select .caret { position: absolute; right: 4px; top: 7px; border-top-color: #222; }
.opt { width: 11px; height: 11px; margin-right: 3px; flex: none; }
.field { width: 96px; height: 18px; background: #fff; display: flex; align-items: center; padding-left: 1px; border: 1px solid #e4e4e4; }
.rev-foot { flex: 1; margin-top: 2px; border-top: 1px solid #dcdcdc; display: flex; align-items: center; padding: 0 8px 0 5px; }
.info { width: 9px; height: 9px; }
.rev-btn { width: 40px; height: 13px; margin-left: 7px; background: #eee; border: 1px solid #c9c9c9; font-size: 8px; color: #666; padding: 0; }
.ok { color: #777; }

/* On-canvas input */
.dim-input { position: absolute; left: 586px; top: 278px; width: 71px; height: 14px; background: #fff; display: flex; align-items: center; }
.dim-grip { width: 10px; height: 14px; border-right: 1px solid #e2e2e2; background: repeating-linear-gradient(90deg, #ececec 0 1px, #fff 1px 3px); }
.dim-text { margin-left: 6px; width: 41px; font-size: 7.200px; white-space: nowrap; }
.dim-sel { background: #1a74d8; color: #fff; display: inline-block; padding: 0 .5px; line-height: 10px; }
.dim-more { width: 2px; height: 8px; margin-left: 5px; background: repeating-linear-gradient(180deg, #666 0 2px, transparent 2px 3px); }

/* Nav bar */
.navbar { position: absolute; left: 426px; bottom: 4px; height: 16px; width: 161px; background: #f1f1f1; display: flex; align-items: center; padding-left: 3px; }
.nv { width: 11px; height: 11px; flex: none; }
.nv-g { margin-left: 5px; }
.nv-c { width: 0; height: 0; border: 2px solid transparent; border-top: 3px solid #333; border-bottom: 0; margin-left: 1px; flex: none; }
.status { position: absolute; right: 10px; bottom: 7px; font-size: 7.500px; font-weight: bold; color: #555; }

/* Timeline */
.timeline { height: 32px; background: #f3f3f3; border-top: 1px solid #c8c8c8; display: flex; align-items: center; padding: 0 9px 0 7px; flex: none; }
.tl-btns { display: flex; gap: 7.700px; }
.tl { width: 9px; height: 9px; flex: none; }
.tl-feature { margin-left: 12px; position: relative; width: 24px; height: 24px; }
.tl-chip { position: absolute; left: 0; top: 4px; width: 16px; height: 17px; background: #0d93d4; border-radius: 1px; }
.tl-spark { position: absolute; left: 7px; top: 8px; width: 4px; height: 3px; background: #e7c75a; transform: skewX(-30deg); }
.tl-marker { position: absolute; left: 12px; top: 1px; width: 8px; height: 22px; }
.tl-gear { width: 11px; height: 11px; }
.bottom-edge { position: absolute; left: 0; right: 0; bottom: 0; height: 1px; background: linear-gradient(90deg, #222 0 32px, #ddd 32px 262px, #222 262px); }
.defs { position: absolute; }
```
